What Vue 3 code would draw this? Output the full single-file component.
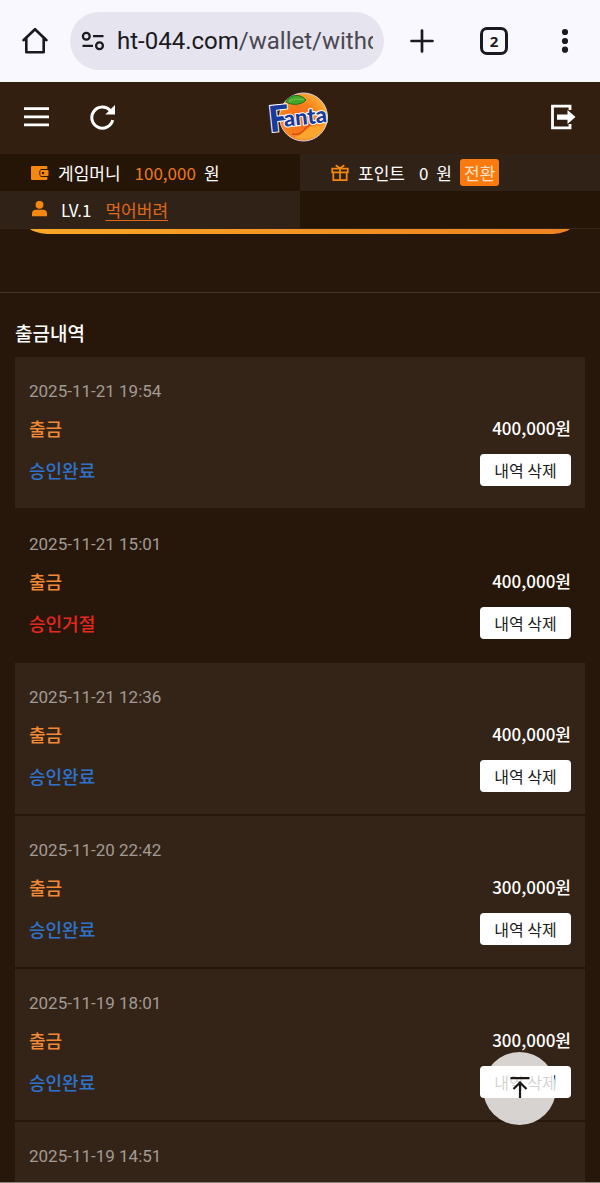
<template>
  <div class="phone">
    <!-- 브라우저 주소창 -->
    <div class="browser-bar">
      <button class="bar-btn" type="button" aria-label="홈">
        <svg width="30" height="30" viewBox="0 0 30 30" fill="none" stroke="#1b1a20" stroke-width="2.6" stroke-linejoin="round" stroke-linecap="round">
          <path d="M3.5 14.2 15 3.2l11.500 11" />
          <path d="M6.300 12.500V26.300H23.700V12.500" />
        </svg>
      </button>
      <div class="address">
        <svg class="tune" width="24" height="20" viewBox="0 0 24 20" fill="none" stroke="#1b1a20" stroke-width="2.300">
          <circle cx="5.300" cy="5.200" r="3.400" />
          <path d="M12 5.200H22.500M1.500 14.800H12" />
          <circle cx="18.500" cy="14.800" r="3.400" />
        </svg>
        <div class="url">ht-044.com<span>/wallet/withdraw</span></div>
      </div>
      <div class="bar-actions">
        <button class="bar-btn" type="button" aria-label="새 탭">
          <svg width="28" height="28" viewBox="0 0 28 28" stroke="#1b1a20" stroke-width="2.700" stroke-linecap="round">
            <path d="M14 3.500v21M3.500 14h21" />
          </svg>
        </button>
        <button class="bar-btn" type="button" aria-label="탭">
          <span class="tab-count">2</span>
        </button>
        <button class="bar-btn" type="button" aria-label="메뉴">
          <svg width="28" height="28" viewBox="0 0 28 28" fill="#1b1a20">
            <circle cx="13" cy="5" r="3.100" />
            <circle cx="13" cy="14" r="3.100" />
            <circle cx="13" cy="22.700" r="3.100" />
          </svg>
        </button>
      </div>
    </div>

    <!-- 상단 헤더 -->
    <header class="header">
      <div class="header-left">
        <button class="icon-btn" type="button" aria-label="전체메뉴">
          <svg width="26" height="26" viewBox="0 0 26 26" fill="#fff">
            <path d="M0 3.200h25v2.800H0zM0 11.400h25v2.800H0zM0 19.500h25v2.800H0z" />
          </svg>
        </button>
        <button class="icon-btn" type="button" aria-label="새로고침">
          <svg width="26" height="26" viewBox="0 0 26 26">
            <path d="M20.300 6.500A10.600 10.600 0 1 0 22.700 16.200" fill="none" stroke="#fff" stroke-width="3" />
            <path d="M25 1V10.500H15.300z" fill="#fff" />
          </svg>
        </button>
      </div>
      <a class="logo" href="#" aria-label="Fanta">
        <svg width="60" height="52" viewBox="0 0 60 52">
          <defs>
            <radialGradient id="orange" cx="0.400" cy="0.550" r="0.600">
              <stop offset="0" stop-color="#f4631b" />
              <stop offset="0.600" stop-color="#f8821d" />
              <stop offset="1" stop-color="#fbac35" />
            </radialGradient>
          </defs>
          <circle cx="33.500" cy="26" r="24" fill="url(#orange)" stroke="#d9cde5" stroke-width="1" />
          <path d="M24 46C33 45 37 34 46 35C51 35 53 38 52 39C47 46 37 51 24 46z" fill="#fba62c" />
          <path d="M22 43C33 46 35 34 43 32" fill="none" stroke="#d64a12" stroke-width="1.300" />
          <g class="logo-text" transform="rotate(-6 30 30)">
            <text x="-1" y="38" font-size="36">F</text>
            <text x="14" y="34" font-size="22">anta</text>
          </g>
          <path d="M16 11C20 3 30 2 36 9C30 15 21 14 16 11z" fill="#41a62c" stroke="#14601c" stroke-width="0.800" />
          <path d="M19 10.500C25 7 30 8 34 9" fill="none" stroke="#80c540" stroke-width="1" />
        </svg>
      </a>
      <button class="icon-btn logout" type="button" aria-label="로그아웃">
        <svg width="26" height="26" viewBox="0 0 26 26">
          <path d="M20 6V2.200H2.500V23.800H20V20" fill="none" stroke="#fff" stroke-width="2.800" />
          <path d="M7 10.400H17.500V6L25.500 13l-8 7V15.800H7z" fill="#fff" />
        </svg>
      </button>
    </header>

    <!-- 회원 정보 -->
    <div class="member">
      <div class="cell dark">
        <svg class="cell-icon" width="18" height="18" viewBox="0 0 18 18">
          <path d="M1 2H15.500Q16.300 2 16.300 3V5H11Q8.300 5 8.300 9T11 13H16.300V15Q16.300 16 15.500 16H1Q0 16 0 15V3Q0 2 1 2z" fill="#f6870f" />
          <rect x="9.300" y="6" width="8.200" height="6" rx="1" fill="#f6870f" />
          <circle cx="12" cy="9" r="1.200" fill="#261509" />
        </svg>
        <span class="label">게임머니</span>
        <span class="money">100,000</span>
        <span class="won">원</span>
      </div>
      <div class="cell light">
        <svg class="cell-icon" width="18" height="18" viewBox="0 0 18 18" fill="none" stroke="#f6870f" stroke-width="1.700">
          <path d="M1.200 4.600H16.800V8.300H1.200zM2.300 8.300V16.200H15.700V8.300M9 4.600V16M9 4.300 4.700 1.300M9 4.300l4.300-3" />
        </svg>
        <span class="label">포인트</span>
        <span class="point">0</span>
        <span class="won">원</span>
        <button class="convert" type="button">전환</button>
      </div>
      <div class="cell light">
        <svg class="cell-icon" width="18" height="18" viewBox="0 0 18 18" fill="#f6870f">
          <circle cx="8.500" cy="3.800" r="3.900" />
          <path d="M1 15.300V12.800Q1 8.800 5 8.800H12Q16 8.800 16 12.800V15.300z" />
        </svg>
        <span class="level">LV.1</span>
        <a class="nick" href="#">먹어버려</a>
      </div>
      <div class="cell dark"></div>
    </div>

    <!-- 본문 -->
    <main class="content">
      <div class="form-end">
        <button class="submit" type="button" aria-label="출금신청"></button>
      </div>
      <section class="history">
        <h2>출금내역</h2>
        <ul>
          <li v-for="item in list" :key="item.date" :class="{ rejected: !item.approved }">
            <time>{{ item.date }}</time>
            <div class="row">
              <span class="type">출금</span>
              <span class="amount">{{ formatAmount(item.amount) }}원</span>
            </div>
            <div class="row">
              <span class="status">{{ item.approved ? '승인완료' : '승인거절' }}</span>
              <button class="delete" type="button" @click="remove(item)">내역 삭제</button>
            </div>
          </li>
        </ul>
      </section>
    </main>

    <button class="to-top" type="button" aria-label="맨 위로">
      <svg width="24" height="24" viewBox="0 0 24 24" fill="none" stroke="#1a1715" stroke-width="2.200">
        <path d="M2.500 1.200H21.500M12 21V5.500M5.500 12 12 5.500l6.500 6.500" />
      </svg>
    </button>
  </div>
</template>

<script setup>
import { ref } from 'vue'

const list = ref([
  { date: '2025-11-21 19:54', amount: 400000, approved: true },
  { date: '2025-11-21 15:01', amount: 400000, approved: false },
  { date: '2025-11-21 12:36', amount: 400000, approved: true },
  { date: '2025-11-20 22:42', amount: 300000, approved: true },
  { date: '2025-11-19 18:01', amount: 300000, approved: true },
  { date: '2025-11-19 14:51', amount: 300000, approved: true }
])

const formatAmount = (n) => n.toLocaleString('en-US')

const remove = (item) => {
  list.value = list.value.filter((v) => v !== item)
}
</script>

<style>
body {
  margin: 0;
  background: #27170a;
}
</style>

<style scoped>
* {
  box-sizing: border-box;
}

.phone {
  display: flex;
  flex-direction: column;
  height: 100vh;
  overflow: hidden;
  background: #27170a;
  border-bottom: 1px solid #8a8178;
  color: #fff;
  font-family: "Noto Sans CJK KR", sans-serif;
  font-size: 17px;
  line-height: 24px;
}

button {
  padding: 0;
  border: 0;
  background: none;
  color: inherit;
  font: inherit;
  cursor: pointer;
}

svg {
  display: block;
}

/* 주소창 */
.browser-bar {
  display: flex;
  flex: none;
  align-items: center;
  height: 82px;
  padding: 0 20px;
  background: #f9f8ff;
  color: #1b1a20;
}

.address {
  display: flex;
  flex: 1;
  align-items: center;
  gap: 12px;
  min-width: 0;
  height: 58px;
  margin: 0 24px 0 20px;
  padding: 0 11px;
  border-radius: 29px;
  background: #e6e4ee;
}

.tune {
  flex: none;
}

.url {
  flex: 1;
  overflow: hidden;
  font-family: Roboto, "Noto Sans CJK KR", sans-serif;
  font-size: 24px;
  line-height: 32px;
  white-space: nowrap;
}

.url span {
  color: #4a4852;
}

.bar-actions {
  display: flex;
  gap: 44px;
}

.tab-count {
  display: block;
  width: 28px;
  height: 28px;
  border: 3px solid #1b1a20;
  border-radius: 7px;
  font-family: "Open Sans", sans-serif;
  font-size: 15px;
  font-weight: 700;
  line-height: 22px;
}

/* 헤더 */
.header {
  display: grid;
  flex: none;
  grid-template-columns: 1fr auto 1fr;
  align-items: center;
  height: 72px;
  padding: 0 24px 2px;
  background: #321f0f;
}

.header-left {
  display: flex;
  gap: 40px;
}

.logout {
  justify-self: end;
}

.logo svg {
  overflow: visible;
}

.logo-text {
  fill: #173a9b;
  stroke: #fff;
  stroke-width: 2px;
  paint-order: stroke;
  font-family: Lato, sans-serif;
  font-weight: 900;
}

/* 회원 정보 */
.member {
  display: grid;
  flex: none;
  grid-template-columns: 1fr 1fr;
  grid-auto-rows: 37px;
  border-bottom: 1px solid #352418;
}

.cell {
  display: flex;
  align-items: center;
  padding-left: 31px;
}

.dark {
  background: #251507;
}

.light {
  background: #302217;
}

.cell-icon {
  margin-right: 9px;
}

.money {
  margin-left: 14px;
  color: #ee7a1c;
}

.point {
  margin-left: 14px;
}

.won {
  margin-left: 8px;
}

.convert {
  height: 27px;
  margin-left: 8px;
  padding: 0 4px;
  border-radius: 3px;
  background: #fb7a10;
  color: #ffe3c8;
}

.level {
  margin-left: 3px;
}

.nick {
  margin-left: 14px;
  color: #e0691a;
  text-underline-offset: 3px;
}

/* 본문 */
.content {
  flex: 1;
  min-height: 0;
  overflow: hidden;
}

.form-end {
  display: flex;
  align-items: flex-end;
  height: 64px;
  padding: 0 15px 58px;
  border-bottom: 1px solid #453528;
}

.submit {
  flex: 1;
  height: 70px;
  border-radius: 32px;
  background: linear-gradient(90deg, #f9a826, #ee8122);
}

.history {
  padding: 28px 15px 0;
}

h2 {
  margin: 0 0 12px;
  font-size: 19px;
  font-weight: 500;
  line-height: 24px;
}

ul {
  display: grid;
  gap: 2px;
  margin: 0;
  padding: 0;
  list-style: none;
}

li {
  height: 151px;
  padding: 22px 14px 0;
  background: #342418;
}

li.rejected {
  background: none;
}

time {
  display: block;
  color: #a29a94;
  font-family: Roboto, sans-serif;
  font-size: 17px;
}

.row {
  display: flex;
  align-items: center;
  justify-content: space-between;
  margin-top: 12px;
  font-size: 18px;
  font-weight: 500;
  line-height: 26px;
}

.row + .row {
  margin-top: 13px;
}

.amount {
  font-size: 17px;
}

.delete {
  width: 91px;
  height: 32px;
  border-radius: 4px;
  background: #fff;
  color: #1c1c1c;
  font-size: 16px;
  font-weight: 400;
}

.type {
  color: #f28a35;
}

.status {
  color: #2c74cf;
}

.rejected .status {
  color: #e8271f;
}

/* 맨 위로 버튼 */
.to-top {
  position: fixed;
  right: 44px;
  bottom: 58px;
  display: grid;
  place-items: center;
  width: 73px;
  height: 73px;
  border-radius: 50%;
  background: rgba(255, 255, 255, 0.8);
}
</style>
